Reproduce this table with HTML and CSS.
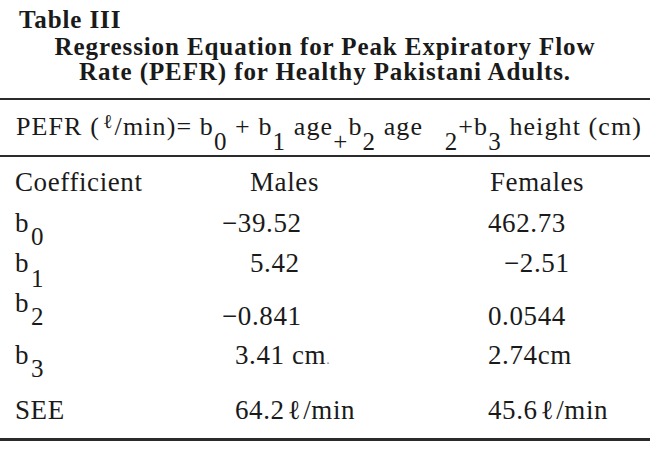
FILE: index.html
```html
<!DOCTYPE html>
<html lang="en">
<head>
<meta charset="utf-8">
<title>Table III</title>
<link rel="stylesheet" href="styles.css">
</head>
<body>
<div class="page">
  <header class="caption">
    <div class="label">Table III</div>
    <div class="title">Regression Equation for Peak Expiratory Flow</div>
    <div class="title">Rate (PEFR) for Healthy Pakistani Adults.</div>
  </header>
  <div class="equation">PEFR (<span class="ell-sup">ℓ</span>/min)= b<sub>0</sub> + b<sub>1</sub> age<sub>+</sub>b<sub>2</sub> age <sub class="gap">2</sub>+b<sub>3</sub> height (cm)</div>
  <div class="table">
    <div class="cell">Coefficient</div>
    <div class="cell in-28">Males</div>
    <div class="cell in-2">Females</div>

    <div class="cell">b<sub>0</sub></div>
    <div class="cell">−39.52</div>
    <div class="cell">462.73</div>

    <div class="cell">b<sub class="deep">1</sub></div>
    <div class="cell in-28">5.42</div>
    <div class="cell in-16">−2.51</div>

    <div class="cell"><span class="lift">b</span><sub class="flat">2</sub></div>
    <div class="cell">−0.841</div>
    <div class="cell">0.0544</div>

    <div class="cell">b<sub>3</sub></div>
    <div class="cell in-13">3.41 cm<span class="dot">.</span></div>
    <div class="cell">2.74cm</div>

    <div class="cell">SEE</div>
    <div class="cell in-13">64.2<span class="ell">ℓ</span>/min</div>
    <div class="cell">45.6<span class="ell">ℓ</span>/min</div>
  </div>
  <div class="endrule"></div>
</div>
</body>
</html>
```
FILE: styles.css
```css
html, body {
  margin: 0;
  padding: 0;
  background: #ffffff;
}

.page {
  width: 650px;
  height: 454px;
  color: #1a1a1a;
  font-family: "Liberation Serif", "Times New Roman", serif;
}

.caption {
  padding-top: 7px;
  font-weight: bold;
  font-size: 25px;
  line-height: 25px;
  letter-spacing: 0.9px;
}

.label {
  padding-left: 19px;
  margin-bottom: 2px;
}

.title {
  text-align: center;
}

.equation {
  margin-top: 14px;
  border-top: 2px solid #2b2b2b;
  border-bottom: 2px solid #2b2b2b;
  box-sizing: border-box;
  height: 59px;
  padding: 12px 0 0 16px;
  font-size: 26px;
  line-height: 30px;
  letter-spacing: 1.1px;
  white-space: nowrap;
}

.equation sub {
  font-size: 25px;
  line-height: 0;
  vertical-align: -15px;
}

.equation .gap {
  margin-left: 14px;
}

.ell-sup {
  font-size: 20px;
  vertical-align: 7px;
  line-height: 0;
  margin: 0 1px 0 3px;
}

.table {
  display: grid;
  grid-template-columns: 207px 266px 1fr;
  grid-template-rows: 41px 40px 53px 39px 55px 30px;
  padding: 10px 0 0 15px;
  font-size: 27px;
  line-height: 30px;
  letter-spacing: 0.6px;
  white-space: nowrap;
}

.table sub {
  font-size: 25px;
  line-height: 0;
  vertical-align: -13px;
  margin-left: 2px;
}

.table sub.deep {
  vertical-align: -15px;
}

.table sub.flat {
  vertical-align: 0;
}

.lift {
  vertical-align: 13px;
  line-height: 0;
}

.in-28 { padding-left: 28px; }
.in-16 { padding-left: 16px; }
.in-13 { padding-left: 13px; }
.in-2 { padding-left: 2px; }

.dot {
  font-size: 14px;
  color: #8a8a8a;
}

.ell {
  margin: 0 2px 0 3px;
}

.endrule {
  margin-top: 13px;
  height: 3px;
  background: #2b2b2b;
}
```
